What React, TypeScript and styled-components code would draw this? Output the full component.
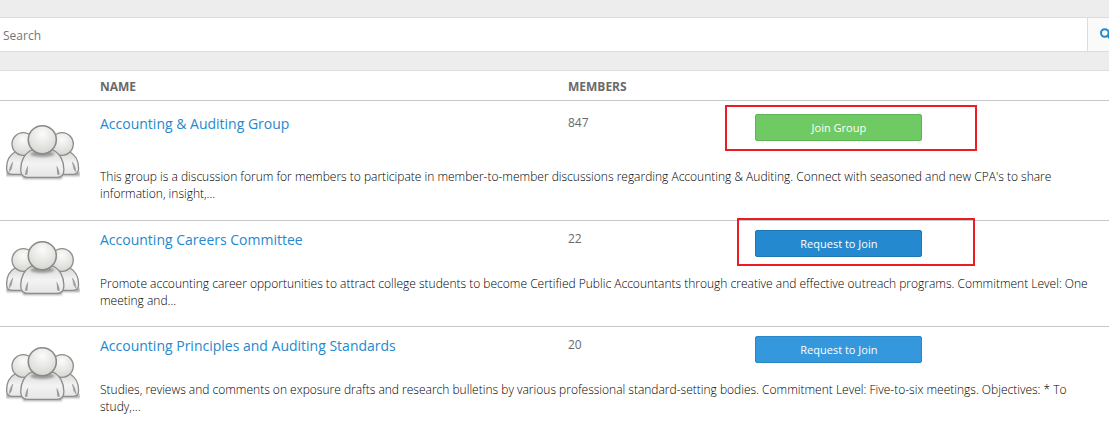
import React from "react";
import styled, { createGlobalStyle } from "styled-components";

const GlobalStyle = createGlobalStyle`
  *, *::before, *::after { box-sizing: border-box; }
  body {
    margin: 0;
    background: #fff;
    color: #333;
    font-family: "Open Sans", "Noto Sans", sans-serif;
    font-size: 12px;
    line-height: 17px;
  }
`;

const Page = styled.main`
  overflow: hidden;
`;

const SearchBand = styled.form`
  padding: 17px 0 18px;
  background: #ededed;
`;

const SearchBar = styled.div`
  display: flex;
  height: 35px;
  border: solid #dcdcdc;
  border-width: 1px 0;
  background: #fff;
`;

const SearchInput = styled.input`
  flex: 1;
  min-width: 0;
  padding: 2px 3px 0;
  border: 0;
  outline: 0;
  background: transparent;
  font: inherit;
  color: #555;

  &::placeholder {
    color: #757575;
    opacity: 1;
  }
`;

const SearchButton = styled.button`
  flex: none;
  display: flex;
  align-items: center;
  width: 22px;
  padding: 0 0 0 12px;
  border: 0;
  border-left: 1px solid #dcdcdc;
  background: #fafafa;
  color: #2489ce;
  overflow: hidden;
  cursor: pointer;

  svg {
    flex: none;
  }
`;

const GroupTable = styled.table`
  width: 100%;
  table-layout: fixed;
  border-collapse: separate;
  border-spacing: 0;
  border-top: 1px solid #dcdcdc;
`;

const Column = styled.col<{ $width?: string }>`
  width: ${(p) => p.$width ?? "auto"};
`;

const HeadCell = styled.th`
  height: 30px;
  padding: 1px 0 0;
  border-bottom: 1px solid #c8c8c8;
  text-align: left;
  font-weight: 700;
  color: #6a6a6a;
`;

const GroupBody = styled.tbody<{ $roomy?: boolean }>`
  --row-top: ${(p) => (p.$roomy ? "13px" : "9px")};
  --row-gap: ${(p) => (p.$roomy ? "27px" : "18px")};
  --row-end: ${(p) => (p.$roomy ? "18px" : "17px")};
  --row-line: 1px solid #c8c8c8;

  &:last-child {
    --row-end: 5px;
    --row-line: 0;
  }
`;

const Cell = styled.td`
  padding: var(--row-top) 0 var(--row-gap);
  vertical-align: top;
`;

const IconCell = styled.td`
  padding: calc(var(--row-top) + 10px) 0 0 6px;
  border-bottom: var(--row-line);
  vertical-align: top;

  svg {
    display: block;
  }
`;

const DescriptionCell = styled.td`
  padding: 0 8px var(--row-end) 0;
  border-bottom: var(--row-line);
  vertical-align: top;
  font-weight: 300;
  color: #000;
`;

const GroupLink = styled.a`
  display: block;
  font-size: 14px;
  line-height: 20px;
  color: #2489ce;
  text-decoration: none;
`;

const Count = styled.span`
  display: block;
  color: #6a6a6a;
`;

const Action = styled.div`
  position: relative;
  width: 167px;
`;

type Tone = "green" | "blue" | "lightBlue";

const tones: Record<Tone, { fill: string; edge: string }> = {
  green: { fill: "#6fca64", edge: "#5db553" },
  blue: { fill: "#2489ce", edge: "#1d78b6" },
  lightBlue: { fill: "#3598dc", edge: "#2a87c8" },
};

const JoinButton = styled.button<{ $tone: Tone }>`
  display: block;
  width: 100%;
  height: 27px;
  padding: 0;
  border: 1px solid ${(p) => tones[p.$tone].edge};
  border-radius: 2px;
  background: ${(p) => tones[p.$tone].fill};
  color: #fff;
  font: inherit;
  font-size: 11px;
  cursor: pointer;
`;

const Highlight = styled.span<{ $inset: string }>`
  position: absolute;
  inset: ${(p) => p.$inset};
  border: 2px solid #ed1c24;
  pointer-events: none;
`;

function SearchIcon() {
  return (
    <svg width="13" height="13" viewBox="0 0 13 13" aria-hidden="true">
      <circle cx="4.8" cy="5" r="3.8" fill="none" stroke="currentColor" strokeWidth="2" />
      <path d="M7.800 8l4 4" stroke="currentColor" strokeWidth="2.400" strokeLinecap="round" />
    </svg>
  );
}

function PeopleIcon({ id }: { id: string }) {
  const head = `${id}-head`;
  const body = `${id}-body`;
  const soft = `${id}-soft`;
  return (
    <svg width="74" height="60" viewBox="0 0 74 60" aria-hidden="true">
      <defs>
        <radialGradient id={head} cx="0.5" cy="0.3" r="0.75">
          <stop offset="0" stopColor="#fbfbfa" />
          <stop offset="0.55" stopColor="#e6e6e3" />
          <stop offset="1" stopColor="#d2d2ce" />
        </radialGradient>
        <linearGradient id={body} x1="0" y1="0" x2="0" y2="1">
          <stop offset="0" stopColor="#d8d8d6" />
          <stop offset="0.5" stopColor="#f3f3f3" />
          <stop offset="1" stopColor="#e6e6e6" />
        </linearGradient>
        <filter id={soft} x="-20%" y="-60%" width="140%" height="220%">
          <feGaussianBlur stdDeviation="1.3" />
        </filter>
      </defs>
      <g filter={`url(#${soft})`} fill="#555" opacity="0.5">
        <rect x="0" y="48" width="74" height="4" />
        <rect x="17" y="51" width="39" height="4" />
      </g>
      <g stroke="#8c8c8a" strokeWidth="1.3">
        <path
          d="M9 28C3.500 31 .6 37 .6 44.500c0 4 2 5.800 5.400 5.800h24V28z"
          fill={`url(#${body})`}
        />
        <path
          d="M64 28c5.500 3 8.600 9 8.600 16.500 0 4-2 5.800-5.400 5.800H43V28z"
          fill={`url(#${body})`}
        />
        <path
          d="M3.200 48c.3-4 1.400-7 3.600-10l-1.400 7zM70 48c-.3-4-1.400-7-3.600-10l1.400 7z"
          fill="#999"
          stroke="#999"
          strokeWidth="0.500"
        />
        <circle cx="17.300" cy="20" r="11.300" fill={`url(#${head})`} />
        <circle cx="56" cy="20" r="11.300" fill={`url(#${head})`} />
        <path
          d="M26 26C18.500 29 14.700 37 14.700 45.500c0 5.500 2.500 7.800 7 7.800h29.200c4.500 0 7-2.300 7-7.800C57.900 37 54 29 46.600 26z"
          fill={`url(#${body})`}
        />
        <path d="M19 51c.3-4 1.400-7 3.200-9.500l-.8 9zM53.700 51c-.3-4-1.400-7-3.200-9.500l.8 9z" fill="#999" stroke="none" />
      </g>
      <ellipse cx="36.300" cy="30" rx="12" ry="3" fill="#555" opacity="0.5" filter={`url(#${soft})`} />
      <circle cx="36.300" cy="15.700" r="14" fill={`url(#${head})`} stroke="#888886" strokeWidth="1.500" />
    </svg>
  );
}

interface Group {
  id: string;
  name: string;
  members: number;
  action: string;
  tone: Tone;
  description: string;
  roomy?: boolean;
  highlight?: string;
}

const groups: Group[] = [
  {
    id: "auditing",
    name: "Accounting & Auditing Group",
    members: 847,
    action: "Join Group",
    tone: "green",
    roomy: true,
    highlight: "-9px -55px -10px -30px",
    description:
      "This group is a discussion forum for members to participate in member-to-member discussions regarding Accounting & Auditing. Connect with seasoned and new CPA's to share information, insight,...",
  },
  {
    id: "careers",
    name: "Accounting Careers Committee",
    members: 22,
    action: "Request to Join",
    tone: "blue",
    highlight: "-12px -53px -9px -18px",
    description:
      "Promote accounting career opportunities to attract college students to become Certified Public Accountants through creative and effective outreach programs. Commitment Level: One meeting and...",
  },
  {
    id: "standards",
    name: "Accounting Principles and Auditing Standards",
    members: 20,
    action: "Request to Join",
    tone: "lightBlue",
    description:
      "Studies, reviews and comments on exposure drafts and research bulletins by various professional standard-setting bodies. Commitment Level: Five-to-six meetings. Objectives: * To study,...",
  },
];

export default function App() {
  return (
    <Page>
      <GlobalStyle />
      <SearchBand role="search" onSubmit={(e) => e.preventDefault()}>
        <SearchBar>
          <SearchInput type="text" placeholder="Search" aria-label="Search" />
          <SearchButton type="submit" aria-label="Submit search">
            <SearchIcon />
          </SearchButton>
        </SearchBar>
      </SearchBand>
      <GroupTable>
        <colgroup>
          <Column $width="100px" />
          <Column $width="42.2%" />
          <Column $width="16.9%" />
          <Column />
        </colgroup>
        <thead>
          <tr>
            <HeadCell aria-label="Icon" />
            <HeadCell scope="col">NAME</HeadCell>
            <HeadCell scope="col">MEMBERS</HeadCell>
            <HeadCell aria-label="Action" />
          </tr>
        </thead>
        {groups.map((g) => (
          <GroupBody key={g.id} $roomy={g.roomy}>
            <tr>
              <IconCell rowSpan={2}>
                <PeopleIcon id={g.id} />
              </IconCell>
              <Cell>
                <GroupLink href="#">{g.name}</GroupLink>
              </Cell>
              <Cell>
                <Count>{g.members}</Count>
              </Cell>
              <Cell>
                <Action>
                  <JoinButton type="button" $tone={g.tone}>
                    {g.action}
                  </JoinButton>
                  {g.highlight && <Highlight $inset={g.highlight} />}
                </Action>
              </Cell>
            </tr>
            <tr>
              <DescriptionCell colSpan={3}>{g.description}</DescriptionCell>
            </tr>
          </GroupBody>
        ))}
      </GroupTable>
    </Page>
  );
}
